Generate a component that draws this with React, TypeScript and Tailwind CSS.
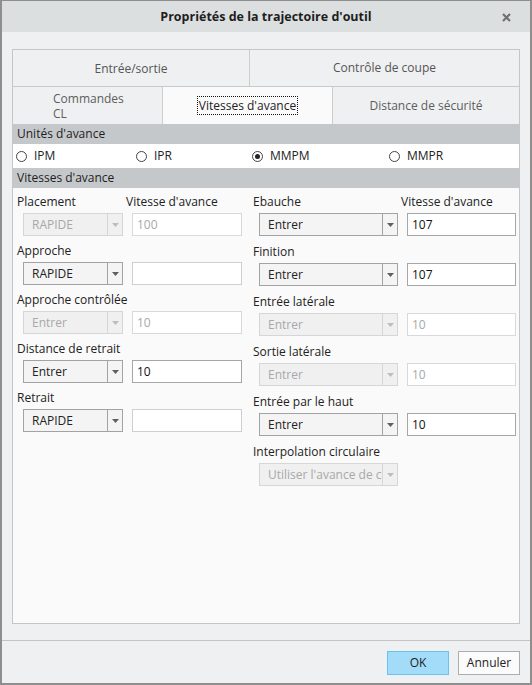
import React from 'react'

const font = { fontFamily: '"Open Sans", "Noto Sans", sans-serif' }

function Arrow({ disabled }: { disabled?: boolean }) {
  return (
    <svg width="7" height="4" viewBox="0 0 7 4">
      <path d="M0 0 H7 L3.5 4 Z" fill={disabled ? '#bdbdbd' : '#5f5f5f'} />
    </svg>
  )
}

function Combo({ value, width, disabled }: { value: string; width: string; disabled?: boolean }) {
  return (
    <div
      className={`flex h-[23px] shrink-0 border ${width} ${
        disabled ? 'border-[#d6d6d6] bg-[#f0f0f0] text-[#a8a8a8]' : 'border-[#a3a3a3] bg-[#f4f4f4] text-[#222]'
      }`}
    >
      <div className="flex min-w-0 flex-1 items-center overflow-hidden whitespace-nowrap pl-[8px]">{value}</div>
      <div
        className={`flex w-[15px] shrink-0 items-center justify-center border-l ${
          disabled ? 'border-[#d6d6d6]' : 'border-[#a3a3a3]'
        }`}
      >
        <Arrow disabled={disabled} />
      </div>
    </div>
  )
}

function Field({ value, width, disabled, light }: { value?: string; width: string; disabled?: boolean; light?: boolean }) {
  const border = disabled ? 'border-[#d9d9d9] text-[#a8a8a8]' : light ? 'border-[#cfcfcf]' : 'border-[#a6a6a6] text-[#111]'
  return <div className={`flex h-[23px] shrink-0 items-center border bg-white pl-[4px] ${width} ${border}`}>{value}</div>
}

function Radio({ label, checked, width }: { label: string; checked?: boolean; width: string }) {
  return (
    <div className={`flex items-center gap-[7px] ${width}`}>
      <span className="flex h-[11px] w-[11px] items-center justify-center rounded-full border border-[#444] bg-white">
        {checked && <span className="h-[5px] w-[5px] rounded-full bg-[#222]" />}
      </span>
      <span className="text-[#222]">{label}</span>
    </div>
  )
}

type Row = { label: string; combo: string; value?: string; disabled?: boolean; light?: boolean; head?: string }

const leftRows: Row[] = [
  { label: 'Placement', head: "Vitesse d'avance", combo: 'RAPIDE', value: '100', disabled: true },
  { label: 'Approche', combo: 'RAPIDE', light: true },
  { label: 'Approche contrôlée', combo: 'Entrer', value: '10', disabled: true },
  { label: 'Distance de retrait', combo: 'Entrer', value: '10' },
  { label: 'Retrait', combo: 'RAPIDE', light: true },
]

const rightRows: Row[] = [
  { label: 'Ebauche', head: "Vitesse d'avance", combo: 'Entrer', value: '107' },
  { label: 'Finition', combo: 'Entrer', value: '107' },
  { label: 'Entrée latérale', combo: 'Entrer', value: '10', disabled: true },
  { label: 'Sortie latérale', combo: 'Entrer', value: '10', disabled: true },
  { label: 'Entrée par le haut', combo: 'Entrer', value: '10' },
]

function FeedRow({ row, comboW, fieldW, labelW, h }: { row: Row; comboW: string; fieldW: string; labelW: string; h: string }) {
  return (
    <div className={h}>
      <div className="flex h-[16px] items-center whitespace-nowrap text-[#222]">
        <span className={row.head ? labelW : ''}>{row.label}</span>
        {row.head && <span>{row.head}</span>}
      </div>
      <div className="mt-[3px] flex gap-[9px] pl-[6px]">
        <Combo value={row.combo} width={comboW} disabled={row.disabled} />
        <Field value={row.value} width={fieldW} disabled={row.disabled} light={row.light} />
      </div>
    </div>
  )
}

export default function App() {
  return (
    <div className="flex h-[685px] w-[532px] flex-col border-2 border-t border-[#8e8e8e] text-[12px]" style={font}>
      <div className="relative flex h-[31px] shrink-0 items-center justify-center bg-[#dcdfe0] pt-[1px]">
        <span className="text-[12.5px] font-bold text-[#1e1e1e]">Propriétés de la trajectoire d'outil</span>
        <svg className="absolute right-[19px] top-[12px]" width="9" height="9" viewBox="0 0 9 9">
          <path d="M1 1 L8 8 M8 1 L1 8" stroke="#707070" strokeWidth="2.2" />
        </svg>
      </div>

      <div className="flex flex-1 flex-col bg-[#eff0f1]">
        <div className="mx-[10px] mt-[17px] flex h-[575px] flex-col border border-[#c6c6c6]">
          <div className="flex h-[37px] shrink-0 border-b border-[#c9c9c9] text-[#555]">
            <div className="flex w-[237px] items-center justify-center border-r border-[#cdcdcd] pt-[2px]">Entrée/sortie</div>
            <div className="flex flex-1 items-center justify-center">Contrôle de coupe</div>
          </div>

          <div className="flex h-[37px] shrink-0 text-[#5d5d5d]">
            <div className="flex w-[149px] items-center pl-[40px] leading-[15px]">
              <span className="w-[72px]">Commandes CL</span>
            </div>
            <div className="flex w-[171px] items-center justify-center border-x border-[#cdcdcd] bg-[#fafafa] text-[#222]">
              <span className="border border-dotted border-[#111] px-[1px] leading-[17px]">Vitesses d'avance</span>
            </div>
            <div className="flex flex-1 items-center justify-center">Distance de sécurité</div>
          </div>

          <div className="flex h-[20px] shrink-0 items-center bg-[#c5c8ca] pl-[4px] text-[#1e1e1e]">Unités d'avance</div>
          <div className="flex h-[24px] shrink-0 items-center bg-white pl-[3px]">
            <Radio label="IPM" width="w-[120px]" />
            <Radio label="IPR" width="w-[116px]" />
            <Radio label="MMPM" checked width="w-[137px]" />
            <Radio label="MMPR" width="w-[110px]" />
          </div>
          <div className="flex h-[20px] shrink-0 items-center bg-[#c5c8ca] pl-[4px] text-[#1e1e1e]">Vitesses d'avance</div>

          <div className="flex flex-1 bg-[#fafafa] pl-[4px] pt-[6px]">
            <div className="w-[236px]">
              {leftRows.map((r) => (
                <FeedRow key={r.label} row={r} h="h-[49px]" comboW="w-[100px]" fieldW="w-[110px]" labelW="w-[109px]" />
              ))}
            </div>
            <div className="flex-1">
              {rightRows.map((r) => (
                <FeedRow key={r.label} row={r} h="h-[50px]" comboW="w-[139px]" fieldW="w-[109px]" labelW="w-[148px]" />
              ))}
              <div className="h-[50px]">
                <div className="flex h-[16px] items-center whitespace-nowrap text-[#222]">Interpolation circulaire</div>
                <div className="mt-[3px] flex pl-[6px]">
                  <Combo value="Utiliser l'avance de coupe" width="w-[139px]" disabled />
                </div>
              </div>
            </div>
          </div>
        </div>

        <div className="mt-[16px] border-t border-[#c4c4c4]" />
        <div className="flex justify-end gap-[9px] pr-[10px] pt-[10px]">
          <button className="h-[24px] w-[62px] border border-[#69c3f0] bg-[#a3dcf9] text-[#222]">OK</button>
          <button className="h-[24px] w-[62px] border border-[#adadad] bg-[#fbfbfb] text-[#222]">Annuler</button>
        </div>
      </div>
    </div>
  )
}
